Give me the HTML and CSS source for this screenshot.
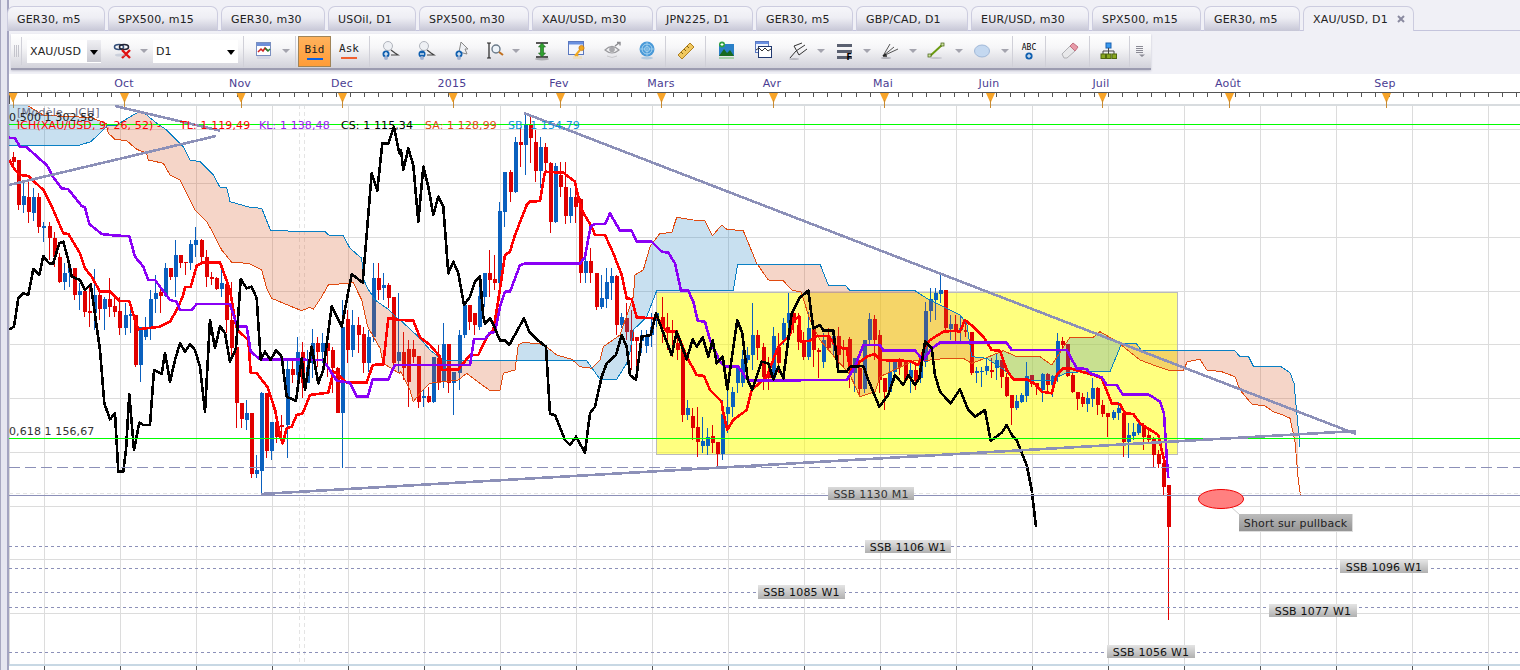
FILE: index.html
```html
<!DOCTYPE html>
<html>
<head>
    <title>XAU/USD, D1</title>
    <meta charset="UTF-8">
    <link rel="stylesheet" href="styles.css">
</head>
<body>
    <div class="app">
        <div class="edge"></div>
        <div class="main">
            <div class="tabs">
                <div class="tab t98">GER30, m5</div>
                <div class="tab t110">SPX500, m15</div>
                <div class="tab t104">GER30, m30</div>
                <div class="tab t88">USOil, D1</div>
                <div class="tab t110">SPX500, m30</div>
                <div class="tab t121">XAU/USD, m30</div>
                <div class="tab t97">JPN225, D1</div>
                <div class="tab t97">GER30, m5</div>
                <div class="tab t112">GBP/CAD, D1</div>
                <div class="tab t118">EUR/USD, m30</div>
                <div class="tab t109">SPX500, m15</div>
                <div class="tab t96">GER30, m5</div>
                <div class="tab active t111">XAU/USD, D1
                    <svg class="close" width="8" height="8" viewBox="0 0 8 8"><path d="M1 1L7 7M7 1L1 7" stroke="#8a8aa0" stroke-width="2"/></svg>
                </div>
            </div>
            <div class="toolbar">
                <div class="grip"></div>
                <div class="combo c74">XAU/USD<span class="combo-btn"></span></div>
                <div class="tool w29 ml7">
                    <svg width="20" height="20" viewBox="0 0 20 20"><ellipse cx="6" cy="6" rx="4.5" ry="2.5" fill="none" stroke="#35507a" stroke-width="1.6"/><ellipse cx="11" cy="6" rx="4.5" ry="2.5" fill="none" stroke="#223" stroke-width="1.6"/><path d="M9 9L17 17M17 9L9 17" stroke="#e01010" stroke-width="2.4"/><ellipse cx="7" cy="14" rx="5" ry="1.5" fill="#b8c0d0" opacity=".6"/></svg>
                </div>
                <div class="drop mr2"></div>
                <div class="combo c85">D1<span class="combo-btn"></span></div>
                <div class="sep s244"></div>
                <div class="tool w30">
                    <svg width="18" height="20" viewBox="0 0 18 20"><rect x="1.5" y="1.5" width="14" height="13" fill="#fff" stroke="#7a8fc0"/><rect x="2" y="2" width="13" height="3" fill="#6f8fd8"/><path d="M3 11L6 8L8 10L10 7L13 10" fill="none" stroke="#d02020" stroke-width="1.5"/><path d="M10 7L13 10L15 8" fill="none" stroke="#208030" stroke-width="1.5"/><rect x="2" y="15" width="13" height="3" fill="#c8cce0" opacity=".6"/></svg>
                </div>
                <div class="drop"></div>
                <div class="sep"></div>
                <div class="bid">Bid</div>
                <div class="ask">Ask</div>
                <div class="sep"></div>
                <div class="tool w36">
                    <svg width="20" height="20" viewBox="0 0 20 20"><circle cx="8" cy="5" r="4.5" fill="#eef0f4" stroke="#b0b4bc"/><path d="M11 9L15 12L18 14L11 14" fill="none" stroke="#444" stroke-width="1.2"/><circle cx="6" cy="13" r="3.5" fill="#1060b0"/><path d="M4 13H8M6 11V15" stroke="#fff" stroke-width="1.2"/><circle cx="6" cy="17" r="2" fill="#a0b0d0"/></svg>
                </div>
                <div class="tool w36">
                    <svg width="20" height="20" viewBox="0 0 20 20"><circle cx="8" cy="5" r="4.5" fill="#eef0f4" stroke="#b0b4bc"/><path d="M11 9L15 12L18 14L11 14" fill="none" stroke="#444" stroke-width="1.2"/><circle cx="6" cy="13" r="3.5" fill="#1060b0"/><path d="M4 13H8" stroke="#fff" stroke-width="1.2"/><circle cx="6" cy="17" r="2" fill="#a0b0d0"/></svg>
                </div>
                <div class="tool w36">
                    <svg width="20" height="20" viewBox="0 0 20 20"><path d="M9 1L16 8L13 8L15 13L7 11Z" fill="#eef0f4" stroke="#888" stroke-width="1"/><circle cx="7" cy="13" r="3.5" fill="#1060b0"/><path d="M5 13H9M7 11V15" stroke="#fff" stroke-width="1.2"/><circle cx="7" cy="17" r="2" fill="#a0b0d0"/></svg>
                </div>
                <div class="tool w29">
                    <svg width="20" height="20" viewBox="0 0 20 20"><path d="M4 2V17M2 2H6M2 17H6" stroke="#222" stroke-width="1.2" fill="none"/><circle cx="11" cy="8" r="4" fill="#eef4fa" stroke="#6a7a8a" stroke-width="1.4"/><path d="M14 11L18 14" stroke="#c07020" stroke-width="2"/></svg>
                </div>
                <div class="drop w16"></div>
                <div class="tool w33">
                    <svg width="16" height="20" viewBox="0 0 16 20"><path d="M2 2H14M2 16H14" stroke="#222" stroke-width="1.4"/><path d="M8 2L11.5 6H9.5V12H11.5L8 16L4.5 12H6.5V6H4.5Z" fill="#30a030" stroke="#186018" stroke-width=".6"/><ellipse cx="8" cy="18" rx="7" ry="1.5" fill="#8a8a90" opacity=".6"/></svg>
                </div>
                <div class="tool w37">
                    <svg width="18" height="20" viewBox="0 0 18 20"><rect x=".5" y=".5" width="15" height="13" fill="#f4f6fc" stroke="#5a78c0"/><rect x="1" y="1" width="14" height="2.5" fill="#6a90e0"/><circle cx="13.5" cy="7" r="2.6" fill="#f0a820" stroke="#c07010" stroke-width=".7"/><path d="M12 9L7 15M8 13L10 15" stroke="#f0a820" stroke-width="2"/><rect x="5" y="15" width="9" height="3" fill="#f0d8a0" opacity=".5"/></svg>
                </div>
                <div class="tool w35">
                    <svg width="18" height="20" viewBox="0 0 18 20"><path d="M1 9Q8 2 15 9Q8 15 1 9Z" fill="#f0f0f2" stroke="#9a9a9e" stroke-width="1.2"/><circle cx="8" cy="8.5" r="2.8" fill="#a8a8ac"/><path d="M11 5L15 2M13 1.5H16V4.5" stroke="#8c8c90" stroke-width="1.4" fill="none"/><path d="M3 15Q8 18 13 15" stroke="#c8c8cc" fill="none"/></svg>
                </div>
                <div class="tool w33">
                    <svg width="18" height="20" viewBox="0 0 18 20"><circle cx="9" cy="8" r="7.5" fill="#4a9ad8"/><circle cx="9" cy="8" r="5" fill="none" stroke="#a8d4f0"/><circle cx="9" cy="8" r="2.5" fill="none" stroke="#a8d4f0"/><path d="M9 .5V15.5M1.5 8H16.5" stroke="#a8d4f0" stroke-width=".7"/><ellipse cx="9" cy="17" rx="6" ry="1.5" fill="#a0c0dc" opacity=".7"/></svg>
                </div>
                <div class="sep"></div>
                <div class="tool w35">
                    <svg width="18" height="18" viewBox="0 0 18 18"><path d="M1 13L13 1L17 5L5 17Z" fill="#f0c860" stroke="#b08020"/><path d="M4 10L6 12M7 7L9 9M10 4L12 6" stroke="#806010"/></svg>
                </div>
                <div class="sep"></div>
                <div class="tool w38">
                    <svg width="18" height="20" viewBox="0 0 18 20"><rect x="1" y="3" width="15" height="12" fill="#2a80c8"/><path d="M1 15L6 8L9 12L12 9L16 15Z" fill="#186a20"/><circle cx="4" cy="3.5" r="3" fill="#30a040"/><path d="M2.5 3.5H5.5M4 2V5" stroke="#fff"/><rect x="1" y="16" width="15" height="2" fill="#90c890" opacity=".7"/></svg>
                </div>
                <div class="tool w36">
                    <svg width="18" height="20" viewBox="0 0 18 20"><rect x=".5" y=".5" width="13" height="11" fill="#f0f4fc" stroke="#5a78c0"/><rect x="1" y="1" width="12" height="2" fill="#6a90e0"/><rect x="3.5" y="5.5" width="13" height="11" fill="#fff" stroke="#203870"/><path d="M1 9L4 7L7 10L10 7L13 10L16 8" fill="none" stroke="#333" stroke-width="1"/></svg>
                </div>
                <div class="tool w32">
                    <svg width="18" height="18" viewBox="0 0 18 18"><path d="M1 16L7 9M5 4L10 13M5 4L13 1M7 9L16 3M10 13L18 7" fill="none" stroke="#333" stroke-width="1"/><ellipse cx="5" cy="17" rx="5" ry="1" fill="#b8b8c0"/></svg>
                </div>
                <div class="drop"></div>
                <div class="tool w32 stack">
                    <span class="bar"></span><span class="bar"></span><span class="bar"></span><span class="fmark">F</span>
                </div>
                <div class="drop"></div>
                <div class="tool w32">
                    <svg width="18" height="20" viewBox="0 0 18 20"><path d="M2 15L9 3M2 15L13 6M2 15L17 8" stroke="#555" stroke-width="1"/><path d="M2 15L5 13M2 15L6 15" stroke="#222" stroke-width="1.4"/><ellipse cx="5" cy="17" rx="5" ry="1" fill="#b0b0b8"/></svg>
                </div>
                <div class="drop"></div>
                <div class="tool w32">
                    <svg width="18" height="18" viewBox="0 0 18 18"><path d="M3 14L15 3" stroke="#6a9a10" stroke-width="2"/><rect x="1" y="12" width="3" height="3" fill="#d0e8a0" stroke="#405a10" stroke-width=".7"/><rect x="14" y="1" width="3" height="3" fill="#d0e8a0" stroke="#405a10" stroke-width=".7"/><ellipse cx="9" cy="16" rx="6" ry="1" fill="#c4c4cc"/></svg>
                </div>
                <div class="drop"></div>
                <div class="tool w32">
                    <svg width="18" height="14" viewBox="0 0 18 14"><ellipse cx="9" cy="7" rx="7.5" ry="6" fill="#c4d8f0" stroke="#a0b8d8"/></svg>
                </div>
                <div class="drop w12"></div>
                <div class="sep"></div>
                <div class="tool w28 abc">
                    <span>ABC</span>
                    <svg width="8" height="8" viewBox="0 0 8 8"><circle cx="4" cy="4" r="3.6" fill="#1060b0"/><path d="M2 4H6M4 2V6" stroke="#fff"/></svg>
                </div>
                <div class="sep"></div>
                <div class="tool w40 pl4">
                    <svg width="18" height="18" viewBox="0 0 18 18"><path d="M1 12L9 4L14 9L6 16L3 16Z" fill="#e8e8ea" stroke="#b0b0b4"/><path d="M9 4L12 1L17 5L14 9Z" fill="#e89aa8" stroke="#c07080"/></svg>
                </div>
                <div class="sep tight"></div>
                <div class="tool w36">
                    <svg width="18" height="18" viewBox="0 0 18 18"><rect x="6" y="1" width="5" height="5" fill="#3a9af0" stroke="#1a60b0"/><path d="M8.5 6V9M3 12V9H14V12M8.5 9V12" fill="none" stroke="#444"/><rect x="1" y="12" width="4.5" height="4.5" fill="#88a820" stroke="#506810"/><rect x="6.5" y="12" width="4.5" height="4.5" fill="#88a820" stroke="#506810"/><rect x="12" y="12" width="4.5" height="4.5" fill="#88a820" stroke="#506810"/></svg>
                </div>
                <div class="sep"></div>
                <div class="tool w15">
                    <svg width="10" height="12" viewBox="0 0 10 12"><path d="M1 1.5H8M1 3.5H8M1 5.5H8M1 7.5H8" stroke="#8a8a94"/><path d="M4 9.5H10L7 12Z" fill="#8a8a94"/></svg>
                </div>
            </div>
            <div class="chart">
                <svg id="plot" class="plot" width="1511" height="596" viewBox="9 74 1511 596"></svg>
                <span class="month m-oct">Oct</span>
                <span class="month m-nov">Nov</span>
                <span class="month m-dec">Dec</span>
                <span class="month m-2015">2015</span>
                <span class="month m-fev">Fev</span>
                <span class="month m-mars">Mars</span>
                <span class="month m-avr">Avr</span>
                <span class="month m-mai">Mai</span>
                <span class="month m-juin">Juin</span>
                <span class="month m-juil">Juil</span>
                <span class="month m-aout">Août</span>
                <span class="month m-sep">Sep</span>

                <span class="legend lg-model">[Modèle - ICH]</span>
                <span class="legend lg-500">0,500 1 302,58</span>
                <span class="legend lg-618">0,618 1 156,67</span>
                <span class="legend lg-ich">ICH(XAU/USD, 9, 26, 52) -</span>
                <span class="legend lg-tl">TL: 1 119,49</span>
                <span class="legend lg-kl">KL: 1 138,48</span>
                <span class="legend lg-cs">CS: 1 115,34</span>
                <span class="legend lg-sa">SA: 1 128,99</span>
                <span class="legend lg-sb">SB: 1 154,79</span>

                <div class="tag tag-1130">SSB 1130 M1</div>
                <div class="tag tag-1106">SSB 1106 W1</div>
                <div class="tag tag-1096">SSB 1096 W1</div>
                <div class="tag tag-1085">SSB 1085 W1</div>
                <div class="tag tag-1077">SSB 1077 W1</div>
                <div class="tag tag-1056">SSB 1056 W1</div>
                <div class="tag tag-short">Short sur pullback</div>
            </div>
        </div>
    </div>
    <script src="chart.js"></script>
</body>
</html>
```
FILE: styles.css
```css
html, body {
    margin: 0;
    height: 100%;
    overflow: hidden;
}
body {
    font-family: "DejaVu Sans", Verdana, sans-serif;
    font-size: 11px;
    background: #f0f0f6;
    color: #222;
}
.app {
    display: flex;
    width: 1520px;
    height: 670px;
}
.edge {
    width: 6px;
    flex: none;
    background: #e6e6f0;
    border-left: 1px solid #a8a8c0;
    border-right: 2px solid #a4a4c0;
}
.main {
    flex: 1;
    display: flex;
    flex-direction: column;
    min-width: 0;
}

/* tabs */
.tabs {
    display: flex;
    gap: 3px;
    height: 24px;
    margin-top: 6px;
    border-bottom: 1px solid #c4c4dc;
    box-sizing: content-box;
    padding-left: 0;
    margin-left: -2px;
}
.tab {
    box-sizing: border-box;
    height: 25px;
    padding: 6px 0 0 9px;
    border: 1px solid #ccccdf;
    border-bottom: none;
    border-radius: 7px 7px 0 0;
    background: linear-gradient(#f6f6fa, #eeeef4 45%, #c6c6d6);
    letter-spacing: .2px;
    white-space: nowrap;
}
.tab.active {
    background: #f0f0f6;
    position: relative;
    height: 25px;
}
.close {
    position: absolute;
    right: 8px;
    top: 8px;
}
.t88 { width: 88px; }
.t96 { width: 96px; }
.t97 { width: 97px; }
.t98 { width: 98px; }
.t104 { width: 104px; }
.t109 { width: 109px; }
.t110 { width: 110px; }
.t111 { width: 111px; }
.t112 { width: 112px; }
.t118 { width: 118px; }
.t121 { width: 121px; }

/* toolbar */
.toolbar {
    display: flex;
    align-items: center;
    width: 1140px;
    height: 34px;
    margin: 3px 0 4px 2px;
    background: linear-gradient(#fff, #f6f6f8 40%, #d2d2da);
    border-bottom: 2px solid #9c9cb0;
    box-sizing: content-box;
    box-shadow: 0 1px 2px #c4c4d0;
}
.grip {
    width: 10px;
    height: 28px;
    margin-right: 5px;
    border-right: 1px solid #d0d0d8;
    background: repeating-linear-gradient(90deg, #c4c4cc 0 1px, transparent 1px 2px) 3px 8px / 5px 12px no-repeat;
    box-sizing: content-box;
}
.combo {
    position: relative;
    box-sizing: border-box;
    height: 23px;
    padding: 5px 0 0 3px;
    background: #fff;
    font-size: 11px;
    letter-spacing: .1px;
}
.c74 { width: 74px; }
.c85 { width: 85px; }
.combo-btn {
    position: absolute;
    right: 0;
    top: 0;
    bottom: 1px;
    width: 14px;
    background: linear-gradient(#f0f0f4, #c8c8d0);
}
.combo-btn::after {
    content: "";
    position: absolute;
    left: 3px;
    top: 10px;
    border: 4px solid transparent;
    border-top: 5px solid #000;
    border-bottom: 0;
}
.c85 .combo-btn {
    background: #fff;
}
.tool {
    flex: none;
    display: flex;
    align-items: center;
    justify-content: center;
    height: 30px;
}
.ml7 { margin-left: 7px; }
.mr2 { margin-right: 2px; }
.pl4 { box-sizing: border-box; padding-left: 4px; }
.w15 { width: 15px; }
.w28 { width: 28px; }
.w29 { width: 29px; }
.w30 { width: 30px; }
.w32 { width: 32px; }
.w33 { width: 33px; }
.w35 { width: 35px; }
.w36 { width: 36px; }
.w37 { width: 37px; }
.w38 { width: 38px; }
.w40 { width: 40px; }
.drop {
    flex: none;
    position: relative;
    width: 14px;
    height: 10px;
}
.drop::after {
    content: "";
    position: absolute;
    left: 3px;
    top: 3px;
    border: 4px solid transparent;
    border-top: 4px solid #a4a4ae;
    border-bottom: 0;
}
.drop.w16 { width: 16px; }
.drop.w12 { width: 12px; }
.sep {
    flex: none;
    width: 1px;
    height: 31px;
    margin: 0 2px;
    background: #d0d0d8;
}
.s244 { margin: 0 5px; }
.sep.tight { margin: 0 1px; }
.bid, .ask {
    flex: none;
    align-self: flex-start;
    box-sizing: border-box;
    height: 31px;
    margin-top: 2px;
    padding-top: 6px;
    text-align: center;
    font-family: "DejaVu Sans Mono", monospace;
    font-size: 11px;
}
.bid {
    width: 33px;
    border: 1px solid #a08458;
    background: linear-gradient(#ffb25c, #ff9c38);
}
.bid::after, .ask::after {
    content: "";
    display: block;
    width: 16px;
    height: 2px;
    margin: 2px auto 0;
    background: #0a60e0;
}
.ask {
    width: 36px;
}
.ask::after {
    background: #f06030;
}
.stack {
    position: relative;
    flex-direction: column;
    gap: 3px;
}
.bar {
    width: 15px;
    height: 3px;
    background: #5a6070;
}
.fmark {
    position: absolute;
    right: 8px;
    bottom: 4px;
    font-size: 8px;
    font-weight: bold;
    color: #000;
}
.abc {
    flex-direction: column;
    font-family: "DejaVu Sans Mono", monospace;
    font-size: 8px;
    line-height: 9px;
    color: #000;
}

/* chart */
.chart {
    position: relative;
    flex: 1;
    background: #fff;
    overflow: hidden;
}
.plot {
    display: block;
}
.month {
    position: absolute;
    top: 3px;
    transform: translateX(-50%);
    color: #4a3c92;
    letter-spacing: .2px;
}
.m-oct { left: 115px; }
.m-nov { left: 231px; }
.m-dec { left: 333px; }
.m-2015 { left: 443px; }
.m-fev { left: 550px; }
.m-mars { left: 652px; }
.m-avr { left: 763px; }
.m-mai { left: 874px; }
.m-juin { left: 980px; }
.m-juil { left: 1092px; }
.m-aout { left: 1219px; }
.m-sep { left: 1376px; }

.legend {
    position: absolute;
    line-height: 13px;
    white-space: nowrap;
    letter-spacing: .1px;
}
.lg-model { left: 8px; top: 32px; color: #6a6a82; letter-spacing: .3px; }
.lg-500 { left: 0; top: 37px; color: #222; }
.lg-618 { left: 0; top: 351px; color: #333; }
.lg-ich { left: 8px; top: 45px; color: #f00; }
.lg-tl { left: 171px; top: 45px; color: #f00; }
.lg-kl { left: 250px; top: 45px; color: #9a20f0; }
.lg-cs { left: 332px; top: 45px; color: #000; }
.lg-sa { left: 416px; top: 45px; color: #e04a10; }
.lg-sb { left: 499px; top: 45px; color: #0a90d8; }

.tag {
    position: absolute;
    box-sizing: border-box;
    height: 13px;
    line-height: 15px;
    text-align: center;
    background: linear-gradient(#e4e4e4, #b0b0b0);
    color: #111;
    white-space: nowrap;
    letter-spacing: .2px;
}
.tag-1130 { left: 819px; top: 413px; width: 86px; color: #333; background: linear-gradient(#dadada, #a8a8a8); }
.tag-1106 { left: 856px; top: 466px; width: 86px; }
.tag-1096 { left: 1331px; top: 486px; width: 88px; }
.tag-1085 { left: 749px; top: 511px; width: 87px; height: 14px; }
.tag-1077 { left: 1260px; top: 530px; width: 88px; }
.tag-1056 { left: 1098px; top: 571px; width: 88px; }
.tag-short {
    left: 1230px;
    top: 440px;
    width: 114px;
    height: 18px;
    line-height: 19px;
    background: linear-gradient(#bcbcbc, #959595);
    border-right: 1px solid #ddd;
    border-bottom: 1px solid #ddd;
    color: #222;
}

/* svg classes */
.grid-line { stroke: #dcdcdc; fill: none; shape-rendering: crispEdges; }
.grid-dash { stroke: #e4e4e4; stroke-dasharray: 4 3; fill: none; shape-rendering: crispEdges; }
.ruler { stroke: #555; shape-rendering: crispEdges; }
.axis-band { fill: #d8dcdf; }
.foot-band { fill: #c8d8e4; }
.marker { fill: #f8a428; }
.marker-stem { stroke: #c88a30; shape-rendering: crispEdges; }
.green { stroke: #00ff00; stroke-width: 1.4; shape-rendering: crispEdges; }
.level { stroke: #8c90b8; shape-rendering: crispEdges; fill: none; }
.level-dash { stroke-dasharray: 11 5; }
.level-dot { stroke-dasharray: 3 3; }
.trend { stroke: #8c90b8; stroke-width: 2.6; fill: none; shape-rendering: crispEdges; }
.box { fill: rgba(255, 255, 0, .5); stroke: #bbb; shape-rendering: crispEdges; }
.cloud-up { fill: rgba(215, 87, 35, .25); }
.cloud-down { fill: rgba(35, 131, 195, .25); }
.wick-r { stroke: #e00000; shape-rendering: crispEdges; }
.wick-b { stroke: #0a60be; shape-rendering: crispEdges; }
.body-r { fill: #e00000; shape-rendering: crispEdges; }
.body-b { fill: #0a60be; shape-rendering: crispEdges; }
.line { fill: none; stroke-linejoin: round; shape-rendering: crispEdges; }
.tl { stroke: #ff0000; stroke-width: 2.6; }
.kl { stroke: #8a00f5; stroke-width: 2.6; }
.cs { stroke: #000; stroke-width: 2.6; }
.sa { stroke: #e04a10; stroke-width: 1; }
.sb { stroke: #0a80c4; stroke-width: 1; }
.oval { fill: #ff8080; stroke: #f00000; }
.pointer { stroke: #ccc; }
```
FILE: chart.js
```js
const svg = document.getElementById('plot');
const NS = 'http://www.w3.org/2000/svg';

function add(tag, attrs) {
    const el = document.createElementNS(NS, tag);
    for (const k in attrs) el.setAttribute(k, attrs[k]);
    svg.appendChild(el);
    return el;
}

// points were read off 3x crops, so each block has an origin
function pts(list, ox, oy) {
    const out = [];
    for (let i = 0; i < list.length; i += 2) out.push([ox + list[i] / 3, oy + list[i + 1] / 3]);
    return out;
}

function slice(line, x0, x1) {
    const at = (x) => {
        for (let i = 1; i < line.length; i++) {
            if (line[i][0] >= x) {
                const a = line[i - 1], b = line[i];
                const t = (x - a[0]) / ((b[0] - a[0]) || 1);
                return [x, a[1] + (b[1] - a[1]) * t];
            }
        }
        return line[line.length - 1];
    };
    return [at(x0), ...line.filter((p) => p[0] > x0 && p[0] < x1), at(x1)];
}

const str = (line) => line.map((p) => p[0].toFixed(1) + ',' + p[1].toFixed(1)).join(' ');

// grid
const gridY = [129.5, 183.5, 237.5, 291.5, 344.5, 398.5, 452.5, 506.5, 559.5, 613.5];
const gridX = [];
for (let x = 43.5; x < 1520; x += 76.05) gridX.push(Math.round(x) + 0.5);
gridY.forEach((y) => add('line', { x1: 9, x2: 1520, y1: y, y2: y, class: 'grid-line' }));
gridX.forEach((x) => add('line', { x1: x, x2: x, y1: 105, y2: 664, class: 'grid-line' }));
add('line', { x1: 9.5, x2: 9.5, y1: 105, y2: 664, class: 'grid-line' });
[299.5, 304.5].forEach((x) => add('line', { x1: x, x2: x, y1: 105, y2: 662, class: 'grid-dash' }));

// time axis
add('line', { x1: 9, x2: 1520, y1: 92.5, y2: 92.5, class: 'ruler' });
add('line', { x1: 9.5, x2: 9.5, y1: 92, y2: 105, class: 'ruler' });
for (let i = 0; i < 108; i++) {
    const x = Math.round(12.5 + i * 14.05) + 0.5;
    add('line', { x1: x, x2: x, y1: 92, y2: 97, class: 'ruler' });
}
add('rect', { x: 9, y: 104, width: 1511, height: 2, class: 'axis-band' });
[13, 124.5, 241, 342.5, 453, 560.5, 661.5, 773.5, 884.5, 990.5, 1102.5, 1229.5, 1386.5].forEach((x) => {
    add('polygon', { points: `${x - 4.5},93 ${x + 4.5},93 ${x + .5},102 ${x - .5},102`, class: 'marker' });
    add('line', { x1: x, x2: x, y1: 100, y2: 108, class: 'marker-stem' });
});
gridX.forEach((x) => add('line', { x1: x, x2: x, y1: 666, y2: 670, class: 'ruler' }));
add('rect', { x: 9, y: 664, width: 1511, height: 2, class: 'foot-band' });

// yellow zone sits under the candles
add('rect', { x: 656.5, y: 292.5, width: 521, height: 162, class: 'box' });

// candles: x, high, top, bottom, low, colour
const c4 = [[39,157,170,185,210,'r'],[54,180,180,315,330,'r'],[69,250,288,315,340,'b'],[84,240,292,335,370,'r'],[99,265,290,338,362,'b'],[114,280,292,380,400,'r'],[129,365,378,383,425,'b'],[147,365,378,415,480,'r'],[162,395,415,470,500,'r'],[177,460,470,545,550,'r'],[192,490,518,545,570,'b'],[207,490,505,520,560,'b'],[222,505,505,585,600,'r'],[237,550,572,585,630,'b'],[252,560,572,635,650,'r'],[267,555,632,640,680,'r'],[282,508,585,640,690,'b'],[297,570,585,627,660,'r'],[312,590,597,627,690,'b'],[327,535,597,622,650,'r'],[342,590,618,637,650,'r'],[357,590,632,683,705,'r'],[375,610,645,683,705,'b'],[390,610,643,648,700,'b'],[405,645,645,795,800,'r'],[420,680,680,795,845,'b'],[435,650,680,712,720,'b'],[450,570,597,683,720,'b'],[465,525,580,597,640,'b'],[480,555,577,587,640,'r'],[495,490,505,587,590,'b'],[510,505,505,530,540,'r'],[525,420,465,530,590,'b'],[540,465,465,490,505,'r'],[555,485,487,490,525,'r'],[570,420,433,490,510,'b'],[585,380,420,435,470,'b'],[603,418,420,472,490,'r'],[618,450,470,530,560,'r'],[633,515,530,537,555,'r'],[648,530,533,568,570,'r'],[663,510,550,568,590,'b'],[678,540,552,660,700,'r'],[693,545,660,745,780,'r'],[708,740,740,910,985,'r'],[723,910,910,958,985,'r'],[738,900,938,960,990,'b'],[753,938,938,1122,1135,'r'],[768,1065,1110,1122,1135,'b'],[783,875,878,1112,1180,'b'],[798,878,878,1052,1075,'r'],[813,965,965,1052,1080,'b'],[828,930,965,1010,1030,'r'],[843,945,975,980,1030,'r'],[861,780,808,975,1075,'b'],[876,780,808,825,850,'r'],[891,710,755,825,885,'b'],[906,725,755,848,895,'r'],[921,750,800,848,850,'b'],[936,688,728,790,835,'b'],[951,710,728,755,800,'r'],[966,700,728,755,790,'b'],[981,710,730,752,830,'r'],[996,740,750,805,880,'r'],[1011,800,805,938,940,'r'],[1026,600,680,938,1105,'b'],[1041,630,658,750,790,'r'],[1056,630,675,750,770,'b'],[1073,650,675,705,760,'r'],[1088,680,703,790,820,'r'],[1103,690,712,790,815,'b'],[1118,490,535,712,725,'b'],[1133,490,535,570,600,'r'],[1148,520,555,565,600,'b'],[1163,550,555,595,625,'r'],[1178,590,592,790,810,'r'],[1193,580,755,782,815,'b']];
const c5 = [[10,695,755,805,840,'r'],[25,720,748,845,920,'r'],[40,720,748,770,790,'r'],[55,768,768,905,925,'r'],[70,870,888,893,920,'b'],[85,860,888,905,910,'r'],[100,770,770,905,910,'b'],[115,735,775,845,870,'r'],[130,670,732,845,865,'b'],[145,740,732,850,880,'r'],[160,815,815,850,945,'b'],[177,690,705,818,870,'b'],[192,615,615,705,715,'b'],[207,615,615,665,690,'r'],[222,640,640,675,705,'r'],[237,530,587,680,690,'b'],[252,520,520,590,620,'b'],[267,450,520,540,590,'r'],[282,465,537,550,570,'r'],[297,305,333,550,570,'b'],[312,215,215,335,380,'b'],[330,210,215,275,305,'r'],[345,112,125,275,280,'b'],[360,80,125,135,200,'r'],[375,40,75,135,225,'b'],[390,50,75,115,190,'r'],[405,90,125,212,245,'r'],[420,110,140,212,265,'b'],[435,130,140,190,215,'r'],[450,185,190,365,398,'r'],[465,190,198,365,370,'b'],[480,185,225,260,290,'r'],[495,185,260,347,373,'r'],[510,265,290,347,370,'b'],[525,245,290,320,370,'r'],[540,295,297,520,550,'r'],[555,450,482,520,550,'b'],[570,445,482,520,550,'r'],[587,518,518,622,630,'r'],[602,525,595,622,628,'b'],[617,505,545,597,625,'b'],[632,505,528,548,600,'b'],[647,525,528,675,705,'r'],[662,640,652,675,685,'b'],[678,610,655,695,720,'r'],[693,630,690,722,810,'r'],[708,710,710,722,810,'r'],[723,690,705,722,760,'b'],[738,690,705,738,760,'b'],[753,640,680,705,740,'b'],[768,635,640,650,680,'b'],[785,590,650,680,730,'r'],[800,640,680,700,750,'r'],[815,660,690,700,770,'r'],[830,690,730,750,780,'r'],[845,740,745,945,965,'r'],[860,900,925,945,960,'b'],[875,925,948,985,1020,'r'],[890,920,982,1025,1070,'r'],[905,950,1022,1038,1060,'b'],[920,985,1010,1038,1065,'b'],[935,975,1008,1030,1060,'r'],[950,1025,1025,1062,1100,'r'],[965,900,942,1062,1080,'b'],[982,870,922,942,1000,'b'],[997,860,875,922,950,'b'],[1012,800,805,850,880,'b'],[1027,750,778,850,860,'b'],[1042,740,765,780,790,'b'],[1057,610,705,765,810,'b'],[1072,690,705,745,780,'r'],[1088,730,740,830,870,'r'],[1103,770,820,835,870,'r'],[1118,680,708,835,840,'b'],[1133,700,740,790,820,'r'],[1148,655,670,720,735,'b'],[1163,580,640,670,700,'b'],[1178,620,640,670,700,'r'],[1193,640,675,725,750,'r']];
const c6 = [[10,215,240,290,300,'r'],[25,155,205,290,300,'b'],[40,180,205,270,320,'r'],[55,265,270,275,355,'r'],[70,220,240,305,325,'b'],[85,205,228,265,270,'r'],[100,215,228,255,290,'b'],[115,200,228,285,340,'r'],[130,240,265,270,320,'r'],[147,230,238,325,385,'r'],[162,295,295,340,395,'b'],[177,300,325,388,410,'r'],[192,240,240,388,400,'b'],[207,160,178,240,255,'b'],[222,165,178,240,300,'r'],[237,210,225,360,400,'r'],[252,355,355,395,450,'r'],[268,305,335,395,400,'b'],[283,300,300,335,360,'b'],[298,295,300,320,345,'r'],[315,305,305,360,370,'r'],[330,300,330,355,400,'b'],[345,310,330,362,390,'r'],[360,290,305,355,370,'b'],[375,125,152,305,320,'b'],[390,85,118,152,185,'b'],[405,85,98,120,180,'b'],[420,45,90,102,130,'b'],[435,90,90,205,215,'r'],[450,165,192,207,240,'b'],[465,165,192,215,245,'r'],[480,165,205,210,245,'b'],[495,180,210,215,230,'r'],[513,215,215,340,345,'r'],[528,320,332,338,370,'b'],[543,320,332,335,380,'b'],[558,290,318,332,345,'b'],[573,295,330,335,355,'r'],[588,280,300,325,360,'b'],[603,300,300,352,385,'r'],[618,340,350,408,412,'r'],[633,405,405,443,495,'r'],[648,405,423,443,450,'b'],[663,400,405,425,430,'b'],[678,305,348,408,425,'b'],[693,345,345,372,380,'r'],[708,370,370,378,405,'r'],[725,340,342,390,425,'b'],[740,340,342,375,402,'r'],[755,345,348,375,410,'b'],[770,220,242,350,365,'b'],[785,230,243,255,270,'r'],[800,252,252,348,350,'r'],[815,340,345,397,400,'r'],[830,395,395,418,450,'r'],[845,400,412,432,440,'r'],[860,395,415,432,455,'b'],[875,355,385,418,440,'b'],[890,380,383,435,465,'r'],[905,420,435,462,470,'r'],[920,460,460,472,530,'r'],[938,450,455,473,480,'b'],[953,425,445,458,480,'b'],[968,450,460,547,590,'r'],[983,490,525,547,595,'b'],[998,490,515,528,540,'b'],[1013,480,492,520,525,'b'],[1028,490,495,530,570,'r'],[1043,510,525,540,550,'r'],[1058,530,538,585,620,'r'],[1073,570,583,612,625,'r'],[1088,590,610,680,705,'r'],[1103,675,675,800,1081,'r']];

function candles(list, ox, oy) {
    list.forEach(([x, hi, top, bot, lo, c]) => {
        const px = Math.round(ox + x / 3);
        add('line', { x1: px + .5, x2: px + .5, y1: oy + hi / 3, y2: oy + lo / 3, class: 'wick-' + c });
        add('rect', { x: px - 1.5, y: oy + top / 3, width: 4, height: (bot - top) / 3, class: 'body-' + c });
    });
}
candles(c4, 0, 100);
candles(c5, 400, 100);
candles(c6, 800, 260);

// ichimoku lines
const sb = [
    ...pts([272,125,300,100,325,75,345,78,400,45,420,35,440,45,470,70,500,90,550,140,570,180,600,185,640,225,660,262,680,262,690,305,750,322,785,325,812,392,975,395,985,405,1030,407,1050,445,1085,475,1090,535,1100,560,1125,600,1165,628,1198,660], 0, 100),
    ...pts([3,662,60,715,90,750,130,782,560,782,600,838,650,838,680,790,690,755,700,690,740,650,770,572,1000,572,1013,492,1198,492], 400, 100),
    ...pts([3,12,60,12,85,75,135,75,150,92,345,92,385,118,480,165,500,190,515,290,560,295,620,335,640,360,755,360,800,338,850,335,930,335,965,250], 800, 260),
    ...pts([110,42,125,62,405,62,418,78,445,78,460,108,540,108,570,128,582,160,590,245,600,350], 1100, 330)
];
sb.unshift([9, 145], [80, 145]);
const sa = [
    ...pts([85,18,130,45,200,50,270,52,318,70,325,100,345,118,380,122,410,148,440,160,445,180,490,190,510,225,540,240,585,330,620,365,640,400,665,450,695,487,745,490,785,510,800,565,815,595,870,618,905,632,930,622,940,628,965,590,985,555,1060,548,1085,600,1103,680,1140,745,1150,790,1198,820], 0, 100),
    ...pts([3,815,30,870,40,905,60,880,90,850,175,840,200,820,240,850,270,872,300,870,310,820,345,810,355,735,370,727,430,733,470,765,515,778,540,800,575,805,600,780,610,740,660,705,700,590,705,525,730,510,750,440,780,400,815,398,830,352,880,360,915,362,937,408,965,375,980,388,1030,392,1070,490,1105,540,1150,542,1175,570,1198,575], 400, 100),
    ...pts([3,95,30,180,60,240,150,345,180,410,225,395,240,350,300,322,345,300,390,300,440,295,490,295,515,310,555,295,610,272,650,290,720,290,755,315,810,232,880,232,900,215,960,250], 800, 260),
    ...pts([60,42,120,90,160,105,210,122,250,122,262,95,300,88,320,120,365,125,405,140,420,180,455,222,495,228,520,245,550,255,570,265,585,335,595,450,602,500], 1100, 330)
];
sa.unshift([9, 105]);

// cloud colour flips where the two spans cross
[[28, 108, 'cloud-down'], [108, 364, 'cloud-up'], [364, 518, 'cloud-up'], [518, 757, 'cloud-down'], [757, 985, 'cloud-up'], [985, 1120, 'cloud-down'], [1120, 1298, 'cloud-up']].forEach(([a, b, cls]) => {
    add('polygon', { points: str([...slice(sa, a, b), ...slice(sb, a, b).reverse()]), class: cls });
});
add('polygon', { points: '9,105 28,105 28,145 9,145', class: 'cloud-down' });

add('polyline', { points: str(slice(sa, 28, 1300.6)), class: 'line sa' });
add('polyline', { points: str(slice(sb, 9, 1300)), class: 'line sb' });

const tl = [
    ...pts([28,180,45,210,60,225,85,228,130,270,160,330,190,400,205,402,240,460,255,505,275,530,300,575,330,575,358,603,388,603,405,660,415,688,480,680,510,665,530,630,548,590,555,562,572,560,590,497,610,487,660,487,690,570,705,660,712,690,745,720,752,818,770,820,803,862,825,930,840,1005,848,1030,860,985,875,980,890,945,908,940,930,885,985,878,1000,815,1010,820,1040,848,1100,848,1118,795,1150,793,1165,655,1198,660], 0, 100),
    ...pts([3,660,40,662,60,712,90,735,120,770,125,810,175,808,210,765,235,765,260,712,280,690,295,600,315,465,330,455,345,405,380,315,390,305,420,303,435,215,490,218,525,245,530,270,545,330,575,380,585,405,615,405,640,460,665,525,680,595,695,597,710,652,760,655,770,650,800,695,830,695,860,770,890,825,912,828,930,870,965,905,968,930,982,990,1000,960,1040,930,1055,870,1100,830,1135,740,1170,705,1180,660,1198,650], 400, 100),
    ...pts([3,245,30,242,50,228,85,228,110,262,140,265,150,330,175,310,200,290,225,282,240,300,330,303,355,315,375,260,390,240,430,215,465,212,480,215,495,180,520,200,550,230,575,270,600,272,620,330,640,358,680,358,705,372,725,395,755,400,770,345,790,325,810,325,880,345,905,355,935,430,960,432,975,460,1000,462,1020,490,1075,525,1085,570,1095,610], 800, 260)
];
const kl = [
    ...pts([28,113,45,115,60,140,80,142,120,178,140,195,160,232,185,265,205,268,245,318,255,322,268,372,305,402,350,407,388,408,405,470,430,500,445,540,465,540,510,600,530,605,540,630,575,630,590,612,690,612,712,680,740,680,752,755,780,778,970,780,1010,842,1050,848,1070,890,1103,890,1118,838,1165,838,1185,795,1198,795], 0, 100),
    ...pts([3,795,210,795,222,717,255,717,270,698,285,696,300,620,315,575,330,575,360,495,375,491,540,491,555,470,572,378,585,372,615,372,630,340,660,392,695,392,710,425,755,425,785,455,805,458,825,490,843,572,865,572,880,605,893,662,915,665,930,720,960,785,975,800,1015,800,1045,842,1198,842], 400, 100),
    ...pts([3,360,140,360,165,320,190,255,240,255,250,272,345,272,370,300,395,265,420,248,620,248,635,270,800,270,830,325,860,327,870,340,905,352,920,375,950,375,968,403,1045,403,1080,425,1092,460,1100,590,1105,655], 800, 260)
];
const cs = [
    ...pts([28,688,42,680,55,595,70,580,85,585,100,507,118,525,130,468,147,490,160,490,178,430,190,425,205,480,215,530,240,540,255,570,272,553,290,680,300,750,313,910,330,958,345,940,355,1115,370,1115,378,1050,388,882,402,1050,418,968,430,975,450,975,462,810,485,822,495,758,510,845,525,780,540,730,555,755,570,733,585,750,600,800,615,935,630,660,645,745,660,678,675,700,690,785,708,745,722,537,740,565,755,560,770,595,782,780,795,755,812,780,828,750,845,770,860,890,888,903,905,775,915,870,935,740,955,850,970,810,995,618,1025,680,1055,522,1088,548,1115,220,1132,272,1147,130,1165,130,1182,80,1198,160], 0, 100),
    ...pts([3,150,10,210,25,145,40,195,55,365,70,200,85,260,100,345,115,290,130,320,145,520,160,485,175,520,192,615,210,590,225,545,240,530,250,650,255,672,270,655,285,685,300,722,315,722,328,735,372,655,388,695,410,718,438,740,450,942,465,945,495,1020,510,1035,528,1010,555,1058,570,940,585,920,605,830,620,790,648,765,665,705,680,740,690,825,708,840,725,710,752,705,768,640,815,765,830,695,860,778,878,718,890,740,908,712,925,770,938,720,950,790,968,770,982,868,1012,660,1027,700,1043,840,1057,870,1085,785,1105,790,1120,838,1135,800,1150,835,1175,640,1198,595], 400, 100),
    ...pts([3,110,25,92,40,205,60,195,70,212,100,212,115,335,140,335,150,320,190,318,205,360,238,440,265,405,285,345,310,375,325,345,345,375,358,355,375,245,395,265,405,345,420,395,452,430,480,388,505,450,525,470,555,450,572,543,605,518,620,495,638,530,650,540,680,615,695,690,708,800], 800, 260)
];
[[tl, 'tl'], [kl, 'kl'], [cs, 'cs']].forEach(([line, cls]) => add('polyline', { points: str(line), class: 'line ' + cls }));

// levels and drawings
[124.5, 438.5].forEach((y) => add('line', { x1: 9, x2: 1520, y1: y, y2: y, class: 'green' }));
add('line', { x1: 9, x2: 1520, y1: 467.5, y2: 467.5, class: 'level level-dash' });
add('line', { x1: 9, x2: 1520, y1: 495.5, y2: 495.5, class: 'level' });
add('line', { x1: 9, x2: 1520, y1: 493.5, y2: 493.5, class: 'grid-dash' });
[546.5, 568.5, 592.5, 607.5, 652.5].forEach((y) => add('line', { x1: 9, x2: 1520, y1: y, y2: y, class: 'level level-dot' }));
[[115, 106, 220, 130.7], [9, 185, 216, 136], [524, 113, 1356, 434], [261, 494, 1356, 431]].forEach(([x1, y1, x2, y2]) => add('line', { x1, y1, x2, y2, class: 'trend' }));

add('line', { x1: 1230, y1: 506, x2: 1240, y2: 515, class: 'pointer' });
add('ellipse', { cx: 1221, cy: 499, rx: 22.5, ry: 9.5, class: 'oval' });
```
